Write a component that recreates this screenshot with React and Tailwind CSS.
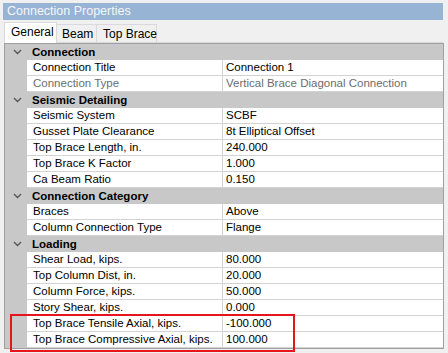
import React from 'react';

const SECTIONS = [
  {
    title: 'Connection',
    rows: [
      { name: 'Connection Title', value: 'Connection 1' },
      { name: 'Connection Type', value: 'Vertical Brace Diagonal Connection', readOnly: true },
    ],
  },
  {
    title: 'Seismic Detailing',
    rows: [
      { name: 'Seismic System', value: 'SCBF' },
      { name: 'Gusset Plate Clearance', value: '8t Elliptical Offset' },
      { name: 'Top Brace Length, in.', value: '240.000' },
      { name: 'Top Brace K Factor', value: '1.000' },
      { name: 'Ca Beam Ratio', value: '0.150' },
    ],
  },
  {
    title: 'Connection Category',
    rows: [
      { name: 'Braces', value: 'Above' },
      { name: 'Column Connection Type', value: 'Flange' },
    ],
  },
  {
    title: 'Loading',
    rows: [
      { name: 'Shear Load, kips.', value: '80.000' },
      { name: 'Top Column Dist, in.', value: '20.000' },
      { name: 'Column Force, kips.', value: '50.000' },
      { name: 'Story Shear, kips.', value: '0.000' },
      { name: 'Top Brace Tensile Axial, kips.', value: '-100.000' },
      { name: 'Top Brace Compressive Axial, kips.', value: '100.000' },
    ],
  },
];

function Chevron() {
  return (
    <svg width="9" height="6" viewBox="0 0 9 6" className="ml-[8px]">
      <path d="M1 1 L4.5 4.5 L8 1" fill="none" stroke="#555" strokeWidth="1.4" />
    </svg>
  );
}

export default function App() {
  return (
    <div
      className="relative w-[448px] h-[353px] overflow-hidden bg-[#f0f0f0] text-[11.5px] text-black"
      style={{ fontFamily: '"Liberation Sans", Arial, sans-serif' }}
    >
      <div className="ml-[3px] mt-[3px] w-[440px] h-[17px] bg-[#98b4d4] text-[#f4f6fa] pl-[4px] leading-[17px] text-[12.5px]">
        Connection Properties
      </div>

      <div className="ml-[4px] mt-[2px] w-[439px] h-[21px] flex items-end whitespace-nowrap text-[12px]">
        <div className="shrink-0 h-[21px] w-[53px] bg-white border border-b-0 border-[#d9d9d9] pl-[6px] leading-[19px]">
          General
        </div>
        <div className="shrink-0 h-[19px] w-[40px] border-t border-r border-[#d9d9d9] border-b pl-[5px] leading-[18px]">
          Beam
        </div>
        <div className="shrink-0 h-[19px] w-[60px] border-t border-r border-[#d9d9d9] border-b pl-[6px] leading-[18px]">
          Top Brace
        </div>
        <div className="flex-1 h-[19px] border-b border-[#d9d9d9]" />
      </div>

      <div className="ml-[4px] w-[440px] border border-[#a0a0a0] bg-[#c8c8c8]">
        {SECTIONS.map((section) => (
          <div key={section.title}>
            <div className="flex items-center h-[16px] bg-[#c8c8c8]">
              <div className="w-[22px] flex items-center">
                <Chevron />
              </div>
              <span className="pl-[5px] font-bold text-[11.5px] leading-[16px]">{section.title}</span>
            </div>
            {section.rows.map((row) => (
              <div key={row.name} className="flex h-[16px]">
                <div className="w-[22px] bg-[#c8c8c8]" />
                <div
                  className={`w-[196px] bg-white border-b border-r border-[#d3d3d3] pl-[6px] leading-[15px] whitespace-nowrap ${
                    row.readOnly ? 'text-[#6d6d6d]' : ''
                  }`}
                >
                  {row.name}
                </div>
                <div
                  className={`flex-1 bg-white border-b border-[#d3d3d3] pl-[3px] leading-[15px] whitespace-nowrap ${
                    row.readOnly ? 'text-[#6d6d6d]' : ''
                  }`}
                >
                  {row.value}
                </div>
              </div>
            ))}
          </div>
        ))}
      </div>

      <div className="absolute left-[10px] top-[314px] w-[285px] h-[38px] border-2 border-[#e8141c]" />
    </div>
  );
}
